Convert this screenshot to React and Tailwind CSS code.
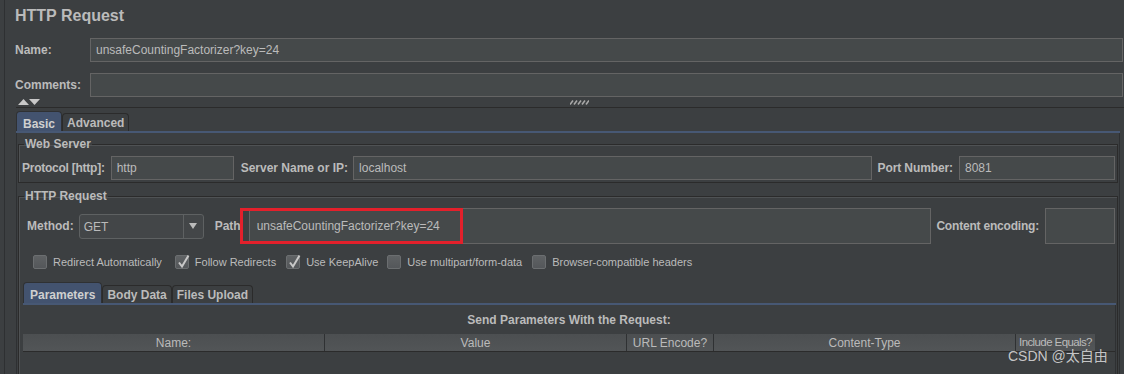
import React from 'react';

// Darcula-style JMeter "HTTP Request" sampler panel

const FONT = { fontFamily: '"Liberation Sans", Arial, "Noto Sans CJK SC", sans-serif' };

function TextField({ value, className = '' }) {
  return (
    <div className={`flex items-center bg-[#45494a] border border-[#646464] px-[5px] text-[12px] text-[#bbbbbb] whitespace-nowrap ${className}`}>
      {value}
    </div>
  );
}

function CheckBox({ checked, label, className = '' }) {
  return (
    <div className={`flex items-center ${className}`}>
      <div className="relative w-[14px] h-[14px] rounded-[2px] border border-[#6b6e70] bg-gradient-to-b from-[#5f6264] to-[#54575a]">
        {checked && (
          <svg className="absolute left-[1px] -top-[2px]" width="13" height="15" viewBox="0 0 13 15">
            <path d="M2 8.5 L5 12.5 L11.5 1.5" fill="none" stroke="#c8c8c8" strokeWidth="2" />
          </svg>
        )}
      </div>
      <span className="ml-[6px] text-[11px] text-[#bbbbbb] whitespace-nowrap">{label}</span>
    </div>
  );
}

function Tab({ label, active }) {
  if (active) {
    return (
      <div className="h-full flex items-start px-[6px] pt-[3px] rounded-t-[4px] bg-[#43536f] border border-b-0 border-[#2f3133] text-[12px] font-bold text-[#d0d0d0]">
        {label}
      </div>
    );
  }
  return (
    <div className="h-[18px] self-end flex items-center px-[4px] rounded-t-[4px] border border-b-0 border-[#2b2b2b] text-[12px] font-bold text-[#bbbbbb]">
      {label}
    </div>
  );
}

function Group({ title, children, className = '' }) {
  return (
    <fieldset className={`shrink-0 border border-[#2b2b2b] shadow-[inset_1px_1px_0_#4f5254] ${className}`}>
      <legend className="ml-[5px] px-[1px] text-[12px] leading-[14px] font-bold text-[#bbbbbb]">{title}</legend>
      {children}
    </fieldset>
  );
}

export default function App() {
  const columns = [
    { name: 'Name:', w: 'w-[302px]' },
    { name: 'Value', w: 'w-[302px]' },
    { name: 'URL Encode?', w: 'w-[87px]' },
    { name: 'Content-Type', w: 'w-[302px]' },
    { name: 'Include Equals?', w: 'w-[79px]' },
  ];

  return (
    <div className="relative w-[1124px] h-[374px] overflow-hidden bg-[#3c3f41] text-[#bbbbbb] flex" style={FONT}>
      <div className="w-[4px] shrink-0" />
      <div className="w-px shrink-0 bg-[#2e3032]" />

      <div className="flex-1 flex flex-col">
        {/* title */}
        <div className="shrink-0 h-[32px] flex items-center pl-[10px] text-[16px] font-bold text-[#bbbbbb]">HTTP Request</div>

        {/* name */}
        <div className="shrink-0 mt-[6px] h-[24px] flex items-center">
          <div className="w-[85px] pl-[10px] text-[12px] font-bold">Name:</div>
          <TextField value="unsafeCountingFactorizer?key=24" className="flex-1 h-full mr-[1px]" />
        </div>

        {/* comments */}
        <div className="shrink-0 mt-[11px] h-[24px] flex items-center">
          <div className="w-[85px] pl-[10px] text-[12px] font-bold">Comments:</div>
          <TextField value="" className="flex-1 h-full mr-[1px]" />
        </div>

        {/* collapse arrows + grip */}
        <div className="shrink-0 h-[10px] flex items-center">
          <svg className="ml-[13px]" width="22" height="6" viewBox="0 0 22 6">
            <polygon points="0,6 5.5,0 11,6" fill="#c8c8c8" />
            <polygon points="11,0 22,0 16.5,6" fill="#c8c8c8" />
          </svg>
          <svg className="ml-[530px]" width="19" height="5" viewBox="0 0 19 5">
            {[0, 4, 8, 12, 16].map((x) => (
              <path key={x} d={`M${x} 4.5 L${x + 3} 0.5`} stroke="#a8a8a8" strokeWidth="1.6" />
            ))}
          </svg>
        </div>
        <div className="shrink-0 ml-[11px] h-px bg-[#2b2b2b]" />

        {/* main tabs */}
        <div className="shrink-0 mt-[3px] ml-[11px] h-[20px] flex">
          <Tab label="Basic" active />
          <Tab label="Advanced" />
        </div>
        <div className="shrink-0 ml-[11px] mr-[4px] h-[2px] bg-[#475874]" />

        {/* tab body */}
        <div className="shrink-0 ml-[11px] mr-[4px] border-l border-r border-[#2e3032] px-[1px] flex flex-col">
          <Group title="Web Server" className="mt-[4px]">
            <div className="mt-[5px] mb-[2px] h-[24px] flex items-center pl-[3px] pr-[2px]">
              <span className="text-[12px] font-bold whitespace-nowrap tracking-[-0.25px]">Protocol [http]:</span>
              <TextField value="http" className="ml-[6px] w-[123px] h-full" />
              <span className="ml-[7px] text-[12px] font-bold whitespace-nowrap">Server Name or IP:</span>
              <TextField value="localhost" className="ml-[5px] flex-1 h-full" />
              <span className="ml-[6px] text-[12px] font-bold whitespace-nowrap tracking-[-0.1px]">Port Number:</span>
              <TextField value="8081" className="ml-[6px] w-[156px] h-full" />
            </div>
          </Group>

          <Group title="HTTP Request" className="mt-[6px]">
            <div className="mt-[5px] h-[36px] flex items-center pl-[8px] pr-[2px]">
              <span className="text-[12px] font-bold">Method:</span>
              <div className="ml-[5px] w-[125px] h-[25px] flex rounded-[3px] border border-[#5e6162] bg-[#434648]">
                <div className="flex-1 pl-[4px] pt-[3px] text-[12px] text-[#bbbbbb]">GET</div>
                <div className="w-[20px] border-l border-[#5e6162] flex items-center justify-center">
                  <svg width="8" height="6" viewBox="0 0 8 6">
                    <polygon points="0,0 8,0 4,6" fill="#bbbbbb" />
                  </svg>
                </div>
              </div>
              <span className="ml-[11px] text-[12px] font-bold">Path</span>
              <TextField value="unsafeCountingFactorizer?key=24" className="ml-[8px] flex-1 h-full pl-[7px]" />
              <span className="ml-[5px] text-[12px] font-bold whitespace-nowrap tracking-[-0.2px]">Content encoding:</span>
              <TextField value="" className="ml-[6px] w-[70px] h-full" />
            </div>

            <div className="mt-[11px] h-[14px] flex items-center pl-[14px]">
              <CheckBox label="Redirect Automatically" />
              <CheckBox label="Follow Redirects" checked className="ml-[13px]" />
              <CheckBox label="Use KeepAlive" checked className="ml-[10px]" />
              <CheckBox label="Use multipart/form-data" className="ml-[9px]" />
              <CheckBox label="Browser-compatible headers" className="ml-[10px]" />
            </div>

            {/* sub tabs */}
            <div className="mt-[13px] ml-[4px] h-[21px] flex">
              <Tab label="Parameters" active />
              <Tab label="Body Data" />
              <Tab label="Files Upload" />
            </div>
            <div className="ml-[4px] mr-[1px] h-[2px] bg-[#475874]" />
            <div className="ml-[4px] mr-[1px] border-r border-[#2e3032] h-[100px]">
              <div className="h-[29px] flex items-center justify-center text-[12px] font-bold">
                Send Parameters With the Request:
              </div>
              <div className="flex h-[18px] border-b border-[#2b2b2b]">
                {columns.map((c, i) => (
                  <div
                    key={c.name}
                    className={`${c.w} shrink-0 h-full flex items-center justify-center overflow-hidden whitespace-nowrap text-[#bbbbbb] bg-gradient-to-b from-[#4c4f51] to-[#525557] ${i < columns.length - 1 ? 'text-[12px] border-r border-[#2f3133] shadow-[1px_0_0_#606366]' : 'text-[11.5px] tracking-[-0.6px]'}`}
                  >
                    {c.name}
                  </div>
                ))}
              </div>
            </div>
          </Group>
        </div>
      </div>

      {/* highlight annotation over the Path field */}
      <div className="absolute left-[240px] top-[208px] w-[223px] h-[36px] border-[3px] border-[#e3202b]" />

      {/* watermark */}
      <div className="absolute left-[1008px] top-[348px] text-[14px] leading-[17px] text-[#d8d8d8]/90">CSDN @太自由</div>
    </div>
  );
}
